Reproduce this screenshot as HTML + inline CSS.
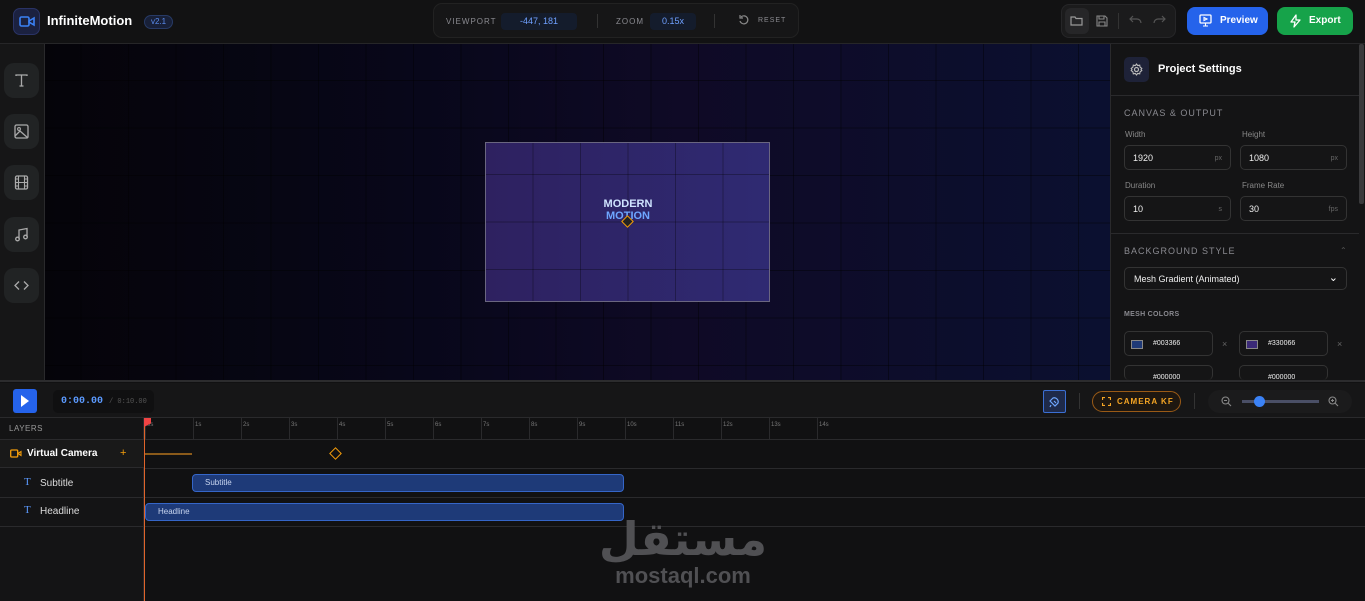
<!DOCTYPE html>
<html><head><meta charset="utf-8"><style>
*{box-sizing:border-box;margin:0;padding:0}
body{width:1365px;height:601px;overflow:hidden;background:#0f0f10;font-family:"Liberation Sans",sans-serif;color:#ddd;position:relative}
.abs{position:absolute}
.top{left:0;top:0;width:1365px;height:44px;background:#121213;border-bottom:1px solid #262628}
.btn{border-radius:8px}
.lbl{font-size:8px;letter-spacing:1px;color:#8a8a90}
.field{position:absolute;height:25px;border:1px solid #333;border-radius:5px;background:#151516;font-size:9px;color:#eee;padding:7px 8px}
.field span{position:absolute;right:8px;top:9px;font-size:7px;color:#666}
.side{left:0;top:44px;width:45px;height:336px;background:#161617;border-right:1px solid #2a2a2c}
.tool{position:absolute;left:4px;width:35px;height:35px;border-radius:10px;background:#212324}
.tool svg{position:absolute;left:9px;top:9px}
.tick{position:absolute;top:422px;font-size:6px;color:#777}
</style></head><body>
<div class="abs top"></div>
<div class="abs" style="left:13px;top:8px;width:27px;height:27px;border-radius:7px;background:#1b2140;border:1px solid #2a3366"></div>
<svg class="abs" style="left:19px;top:15px" width="16" height="13" viewBox="0 0 16 13"><rect x="1" y="2" width="9" height="9" rx="1.5" fill="none" stroke="#3b82f6" stroke-width="1.6"/><path d="M10 6l5-3v7l-5-3z" fill="none" stroke="#3b82f6" stroke-width="1.6"/></svg>
<div class="abs" style="left:47px;top:13px;font-size:13px;font-weight:bold;color:#fff">InfiniteMotion</div>
<div class="abs" style="left:144px;top:15px;width:29px;height:14px;border-radius:7px;background:#182038;border:1px solid #273a66;font-size:8px;color:#5b8def;text-align:center;line-height:12px">v2.1</div>
<div class="abs" style="left:433px;top:3px;width:366px;height:35px;border-radius:9px;background:#161617;border:1px solid #222"></div>
<div class="abs lbl" style="left:446px;top:17px">VIEWPORT</div>
<div class="abs" style="left:501px;top:13px;width:76px;height:17px;border-radius:4px;background:#141c2c;font-size:9px;color:#6fa0ff;text-align:center;line-height:17px">-447, 181</div>
<div class="abs" style="left:597px;top:14px;width:1px;height:14px;background:#333"></div>
<div class="abs lbl" style="left:616px;top:17px">ZOOM</div>
<div class="abs" style="left:650px;top:13px;width:46px;height:17px;border-radius:4px;background:#141c2c;font-size:9px;color:#6fa0ff;text-align:center;line-height:17px">0.15x</div>
<div class="abs" style="left:714px;top:14px;width:1px;height:14px;background:#333"></div>
<svg class="abs" style="left:738px;top:14px" width="12" height="12" viewBox="0 0 12 12"><path d="M3 3a4 4 0 1 1-1 4M2 1v3h3" fill="none" stroke="#888" stroke-width="1.2"/></svg>
<div class="abs lbl" style="left:758px;top:17px;font-size:7px">RESET</div>
<div class="abs" style="left:1061px;top:4px;width:115px;height:34px;border-radius:8px;background:#1b1b1c;border:1px solid #262628"></div>
<div class="abs" style="left:1065px;top:8px;width:24px;height:26px;border-radius:6px;background:#262628"></div>
<svg class="abs" style="left:1070px;top:15px" width="13" height="11" viewBox="0 0 13 11"><path d="M1 2h4l1 1.5h6V10H1z" fill="none" stroke="#999" stroke-width="1.2"/></svg>
<svg class="abs" style="left:1096px;top:15px" width="12" height="12" viewBox="0 0 12 12"><path d="M1 1h8l2 2v8H1zM3 1v3h5V1M3 11V7h6v4" fill="none" stroke="#888" stroke-width="1.1"/></svg>
<div class="abs" style="left:1118px;top:13px;width:1px;height:16px;background:#333"></div>
<svg class="abs" style="left:1129px;top:15px" width="13" height="9" viewBox="0 0 13 9"><path d="M4 1L1 4l3 3M1 4h7a4 4 0 0 1 4 4" fill="none" stroke="#555" stroke-width="1.2"/></svg>
<svg class="abs" style="left:1153px;top:15px" width="13" height="9" viewBox="0 0 13 9"><path d="M9 1l3 3-3 3M12 4H5a4 4 0 0 0-4 4" fill="none" stroke="#555" stroke-width="1.2"/></svg>
<div class="abs btn" style="left:1187px;top:7px;width:81px;height:28px;background:#2563eb;font-size:10px;font-weight:bold;color:#fff;line-height:28px;padding-left:33px">Preview</div>
<svg class="abs" style="left:1199px;top:14px" width="13" height="13" viewBox="0 0 13 13"><rect x="1" y="1" width="11" height="8" rx="1" fill="none" stroke="#fff" stroke-width="1.3"/><path d="M6.5 9v3M4 12h5M5 3.5l3 1.5-3 1.5z" fill="none" stroke="#fff" stroke-width="1.1"/></svg>
<div class="abs btn" style="left:1277px;top:7px;width:76px;height:28px;background:#16a34a;font-size:10px;font-weight:bold;color:#fff;line-height:28px;padding-left:32px">Export</div>
<svg class="abs" style="left:1290px;top:14px" width="11" height="14" viewBox="0 0 11 14"><path d="M6 1L1 8h4l-1 5 6-7H6z" fill="none" stroke="#fff" stroke-width="1.3" stroke-linejoin="round"/></svg>

<div class="abs side"></div>
<div class="tool" style="top:63px"><svg width="17" height="17" viewBox="0 0 17 17"><path d="M3 4V3h11v1M8.5 3v11M6.5 14h4" fill="none" stroke="#aaa" stroke-width="1.3"/></svg></div>
<div class="tool" style="top:114px"><svg width="17" height="17" viewBox="0 0 17 17"><rect x="2" y="2" width="13" height="13" rx="1.5" fill="none" stroke="#aaa" stroke-width="1.3"/><circle cx="6" cy="6" r="1.4" fill="none" stroke="#aaa" stroke-width="1.1"/><path d="M2 13l5-5 8 7" fill="none" stroke="#aaa" stroke-width="1.3"/></svg></div>
<div class="tool" style="top:165px"><svg width="17" height="17" viewBox="0 0 17 17"><rect x="2.5" y="2" width="12" height="13" rx="1.5" fill="none" stroke="#aaa" stroke-width="1.3"/><path d="M5.5 2v13M11.5 2v13M2.5 8.5h12M2.5 5h3M2.5 12h3M11.5 5h3M11.5 12h3" fill="none" stroke="#aaa" stroke-width="1.1"/></svg></div>
<div class="tool" style="top:217px"><svg width="17" height="17" viewBox="0 0 17 17"><path d="M6 13V4l8-1.5V11" fill="none" stroke="#aaa" stroke-width="1.3"/><circle cx="4.5" cy="13" r="1.8" fill="none" stroke="#aaa" stroke-width="1.3"/><circle cx="12.5" cy="11" r="1.8" fill="none" stroke="#aaa" stroke-width="1.3"/></svg></div>
<div class="tool" style="top:268px"><svg width="17" height="17" viewBox="0 0 17 17"><path d="M6 4.5L2 8.5l4 4M11 4.5l4 4-4 4" fill="none" stroke="#aaa" stroke-width="1.3"/></svg></div>

<div class="abs" style="left:45px;top:44px;width:1065px;height:336px;background:linear-gradient(90deg,#050409 0%,#08071a 35%,#0f0a26 60%,#0b1030 100%)"></div>
<div class="abs" style="left:45px;top:44px;width:1065px;height:336px;background-image:linear-gradient(90deg,rgba(0,0,0,.4) 1px,transparent 1px),linear-gradient(0deg,rgba(0,0,0,.4) 1px,transparent 1px);background-size:47.5px 47.5px;background-position:-12px 37px"></div>
<div class="abs" style="left:485px;top:142px;width:285px;height:160px;border:1px solid #6a6680;background-image:linear-gradient(90deg,rgba(0,0,0,.3) 1px,transparent 1px),linear-gradient(0deg,rgba(0,0,0,.3) 1px,transparent 1px),linear-gradient(90deg,#2e2160,#2f2a72);background-size:47.5px 47.5px,47.5px 47.5px,100% 100%;background-position:-1px 32px,-1px 32px,0 0"></div>
<div class="abs" style="left:598px;top:198px;width:60px;text-align:center;font-size:11px;font-weight:bold;line-height:12px;color:#cfe3ff">MODERN<br><span style="color:#6ea6ff">MOTION</span></div>
<div class="abs" style="left:623px;top:217px;width:9px;height:9px;transform:rotate(45deg);background:#222;border:1.5px solid #f59e0b"></div>

<div class="abs" style="left:1110px;top:44px;width:255px;height:336px;background:#141415;border-left:1px solid #2a2a2c"></div>
<div class="abs" style="left:1359px;top:44px;width:5px;height:160px;background:#3a3a3c;border-radius:2px"></div>
<div class="abs" style="left:1124px;top:57px;width:25px;height:25px;border-radius:5px;background:#1e2238"></div>
<svg class="abs" style="left:1130px;top:63px" width="13" height="13" viewBox="0 0 13 13"><circle cx="6.5" cy="6.5" r="2" fill="none" stroke="#bbb" stroke-width="1.2"/><path d="M6.5 1l1.2 1.6 2-.4.4 2L11.8 5.4l-.8 1.1.8 1.1-1.7 1.2-.4 2-2-.4L6.5 12l-1.2-1.6-2 .4-.4-2L1.2 7.6l.8-1.1-.8-1.1 1.7-1.2.4-2 2 .4z" fill="none" stroke="#bbb" stroke-width="1.1"/></svg>
<div class="abs" style="left:1158px;top:63px;font-size:11px;font-weight:bold;color:#fff">Project Settings</div>
<div class="abs" style="left:1111px;top:95px;width:248px;height:1px;background:#2a2a2c"></div>
<div class="abs lbl" style="left:1124px;top:108px;font-size:9px">CANVAS &amp; OUTPUT</div>
<div class="abs" style="left:1125px;top:130px;font-size:8px;color:#888">Width</div>
<div class="abs" style="left:1242px;top:130px;font-size:8px;color:#888">Height</div>
<div class="field" style="left:1124px;top:145px;width:107px">1920<span>px</span></div>
<div class="field" style="left:1240px;top:145px;width:107px">1080<span>px</span></div>
<div class="abs" style="left:1125px;top:181px;font-size:8px;color:#888">Duration</div>
<div class="abs" style="left:1242px;top:181px;font-size:8px;color:#888">Frame Rate</div>
<div class="field" style="left:1124px;top:196px;width:107px">10<span>s</span></div>
<div class="field" style="left:1240px;top:196px;width:107px">30<span>fps</span></div>
<div class="abs" style="left:1111px;top:233px;width:248px;height:1px;background:#2a2a2c"></div>
<div class="abs lbl" style="left:1124px;top:246px;font-size:9px">BACKGROUND STYLE</div>
<div class="abs" style="left:1340px;top:246px;font-size:8px;color:#555">⌃</div>
<div class="field" style="left:1124px;top:267px;width:223px;height:23px;font-size:9px;padding:6px 9px">Mesh Gradient (Animated)<span style="top:3px;font-size:11px;color:#fff">⌄</span></div>
<div class="abs lbl" style="left:1124px;top:311px;font-size:7px;font-weight:bold;letter-spacing:.3px">MESH COLORS</div>
<div class="field" style="left:1124px;top:331px;width:89px;font-size:7px;padding:8px 6px 8px 28px">#003366</div>
<div class="abs" style="left:1131px;top:340px;width:12px;height:9px;background:#1f3a78;border:1px solid #888"></div>
<div class="abs" style="left:1222px;top:339px;font-size:9px;color:#666">×</div>
<div class="field" style="left:1239px;top:331px;width:89px;font-size:7px;padding:8px 6px 8px 28px">#330066</div>
<div class="abs" style="left:1246px;top:340px;width:12px;height:9px;background:#3b2a78;border:1px solid #888"></div>
<div class="abs" style="left:1337px;top:339px;font-size:9px;color:#666">×</div>
<div class="field" style="left:1124px;top:365px;width:89px;height:15px;border-bottom:none;font-size:7px;padding:8px 6px 0 28px">#000000</div>
<div class="field" style="left:1239px;top:365px;width:89px;height:15px;border-bottom:none;font-size:7px;padding:8px 6px 0 28px">#000000</div>

<div class="abs" style="left:0;top:380px;width:1365px;height:221px;background:#111112;border-top:2px solid #2c2c2e"></div>
<div class="abs" style="left:0;top:383px;width:1365px;height:35px;background:#161617;border-bottom:1px solid #2a2a2c"></div>
<div class="abs" style="left:13px;top:389px;width:24px;height:24px;border-radius:3px;background:#2563eb"></div>
<div class="abs" style="left:21px;top:395px;width:0;height:0;border-left:8px solid #fff;border-top:6px solid transparent;border-bottom:6px solid transparent"></div>
<div class="abs" style="left:53px;top:390px;width:101px;height:23px;border-radius:5px;background:#101011;font-family:'Liberation Mono',monospace;font-size:10px;font-weight:bold;color:#5b9aff;line-height:23px;padding-left:8px">0:00.00 <span style="font-size:7px;color:#555;font-weight:normal">/ 0:10.00</span></div>
<div class="abs" style="left:1043px;top:390px;width:23px;height:23px;border-radius:2px;background:#1e2a4a;border:1px solid #3b6fd4"></div>
<svg class="abs" style="left:1048px;top:395px" width="13" height="13" viewBox="0 0 13 13"><path d="M3 10l-1 2M5 3a4 4 0 0 1 5 5l-3 3-5-5z M6 6l2 2" fill="none" stroke="#6ea6ff" stroke-width="1.2"/></svg>
<div class="abs" style="left:1079px;top:393px;width:1px;height:16px;background:#333"></div>
<div class="abs" style="left:1092px;top:391px;width:89px;height:21px;border-radius:11px;border:1px solid #9a5a16;background:#1e1710;color:#f5a524;font-size:8px;font-weight:bold;letter-spacing:1px;line-height:19px;padding-left:24px">CAMERA KF</div>
<svg class="abs" style="left:1102px;top:397px" width="9" height="9" viewBox="0 0 9 9"><path d="M0.5 3V.5H3M6 .5h2.5V3M8.5 6v2.5H6M3 8.5H.5V6" fill="none" stroke="#f5a524" stroke-width="1.2"/></svg>
<div class="abs" style="left:1194px;top:393px;width:1px;height:16px;background:#333"></div>
<div class="abs" style="left:1208px;top:390px;width:144px;height:23px;border-radius:12px;background:#1b1b1c"></div>
<svg class="abs" style="left:1221px;top:396px" width="11" height="11" viewBox="0 0 11 11"><circle cx="4.5" cy="4.5" r="3.5" fill="none" stroke="#888" stroke-width="1.1"/><path d="M7 7l3 3M3 4.5h3" stroke="#888" stroke-width="1.1"/></svg>
<div class="abs" style="left:1242px;top:400px;width:77px;height:3px;background:#4a4f66"></div>
<div class="abs" style="left:1254px;top:396px;width:11px;height:11px;border-radius:50%;background:#3b82f6"></div>
<svg class="abs" style="left:1328px;top:396px" width="11" height="11" viewBox="0 0 11 11"><circle cx="4.5" cy="4.5" r="3.5" fill="none" stroke="#888" stroke-width="1.1"/><path d="M7 7l3 3M3 4.5h3M4.5 3v3" stroke="#888" stroke-width="1.1"/></svg>

<div class="abs" style="left:0;top:418px;width:144px;height:183px;background:#141415;border-right:1px solid #2a2a2c"></div>
<div class="abs" style="left:0;top:418px;width:1365px;height:22px;border-bottom:1px solid #2a2a2c"></div>
<div class="abs" style="left:9px;top:424px;font-size:8px;color:#999;letter-spacing:.5px">LAYERS</div>
<div class="abs" style="left:0;top:440px;width:144px;height:28px;background:#191919;border-bottom:1px solid #2a2a2c"></div>
<svg class="abs" style="left:10px;top:449px" width="12" height="9" viewBox="0 0 12 9"><rect x=".7" y="1" width="7" height="7" rx="1" fill="none" stroke="#f59e0b" stroke-width="1.3"/><path d="M8 4.5l3-2v4z" fill="none" stroke="#f59e0b" stroke-width="1.1"/></svg>
<div class="abs" style="left:27px;top:448px;font-size:10px;font-weight:bold;color:#fff">Virtual Camera</div>
<div class="abs" style="left:120px;top:447px;font-size:11px;color:#f59e0b">+</div>
<div class="abs" style="left:145px;top:468px;width:1220px;height:1px;background:#2a2a2c"></div>
<div class="abs" style="left:0;top:497px;width:1365px;height:1px;background:#2a2a2c"></div>
<div class="abs" style="left:0;top:526px;width:1365px;height:1px;background:#2a2a2c"></div>
<div class="abs" style="left:24px;top:476px;font-size:11px;color:#5b9aff;font-family:'Liberation Serif',serif">T</div>
<div class="abs" style="left:40px;top:478px;font-size:10px;color:#ddd">Subtitle</div>
<div class="abs" style="left:24px;top:504px;font-size:11px;color:#5b9aff;font-family:'Liberation Serif',serif">T</div>
<div class="abs" style="left:40px;top:506px;font-size:10px;color:#ddd">Headline</div>

<div class="tick" style="left:147px">0s</div><div class="tick" style="left:195px">1s</div><div class="tick" style="left:243px">2s</div><div class="tick" style="left:291px">3s</div><div class="tick" style="left:339px">4s</div><div class="tick" style="left:387px">5s</div><div class="tick" style="left:435px">6s</div><div class="tick" style="left:483px">7s</div><div class="tick" style="left:531px">8s</div><div class="tick" style="left:579px">9s</div><div class="tick" style="left:627px">10s</div><div class="tick" style="left:675px">11s</div><div class="tick" style="left:723px">12s</div><div class="tick" style="left:771px">13s</div><div class="tick" style="left:819px">14s</div>
<div class="abs" style="left:145px;top:418px;width:700px;height:22px;background-image:linear-gradient(90deg,#2a2a2c 1px,transparent 1px);background-size:48px 22px;background-position:48px 0"></div>
<div class="abs" style="left:145px;top:453px;width:47px;height:2px;background:#8a5a1a"></div>
<div class="abs" style="left:331px;top:449px;width:9px;height:9px;transform:rotate(45deg);border:1.5px solid #f59e0b"></div>
<div class="abs" style="left:192px;top:474px;width:432px;height:18px;border-radius:4px;background:#1e3a78;border:1px solid #3566c8;font-size:8px;color:#c9d6f0;padding:3px 12px">Subtitle</div>
<div class="abs" style="left:145px;top:503px;width:479px;height:18px;border-radius:4px;background:#1e3a78;border:1px solid #3566c8;font-size:8px;color:#c9d6f0;padding:3px 12px">Headline</div>
<div class="abs" style="left:144px;top:418px;width:1px;height:183px;background:#e0642a"></div>
<div class="abs" style="left:144px;top:418px;width:7px;height:9px;background:#ef4444;clip-path:polygon(0 0,100% 0,100% 60%,0 100%)"></div>

<div class="abs" style="left:583px;top:508px;width:200px;text-align:center;font-family:'Noto Sans CJK SC','DejaVu Sans',sans-serif;font-size:46px;font-weight:bold;color:#505053;line-height:56px">مستقل</div>
<div class="abs" style="left:583px;top:563px;width:200px;text-align:center;font-size:22px;font-weight:bold;color:#505053">mostaql.com</div>
</body></html>
